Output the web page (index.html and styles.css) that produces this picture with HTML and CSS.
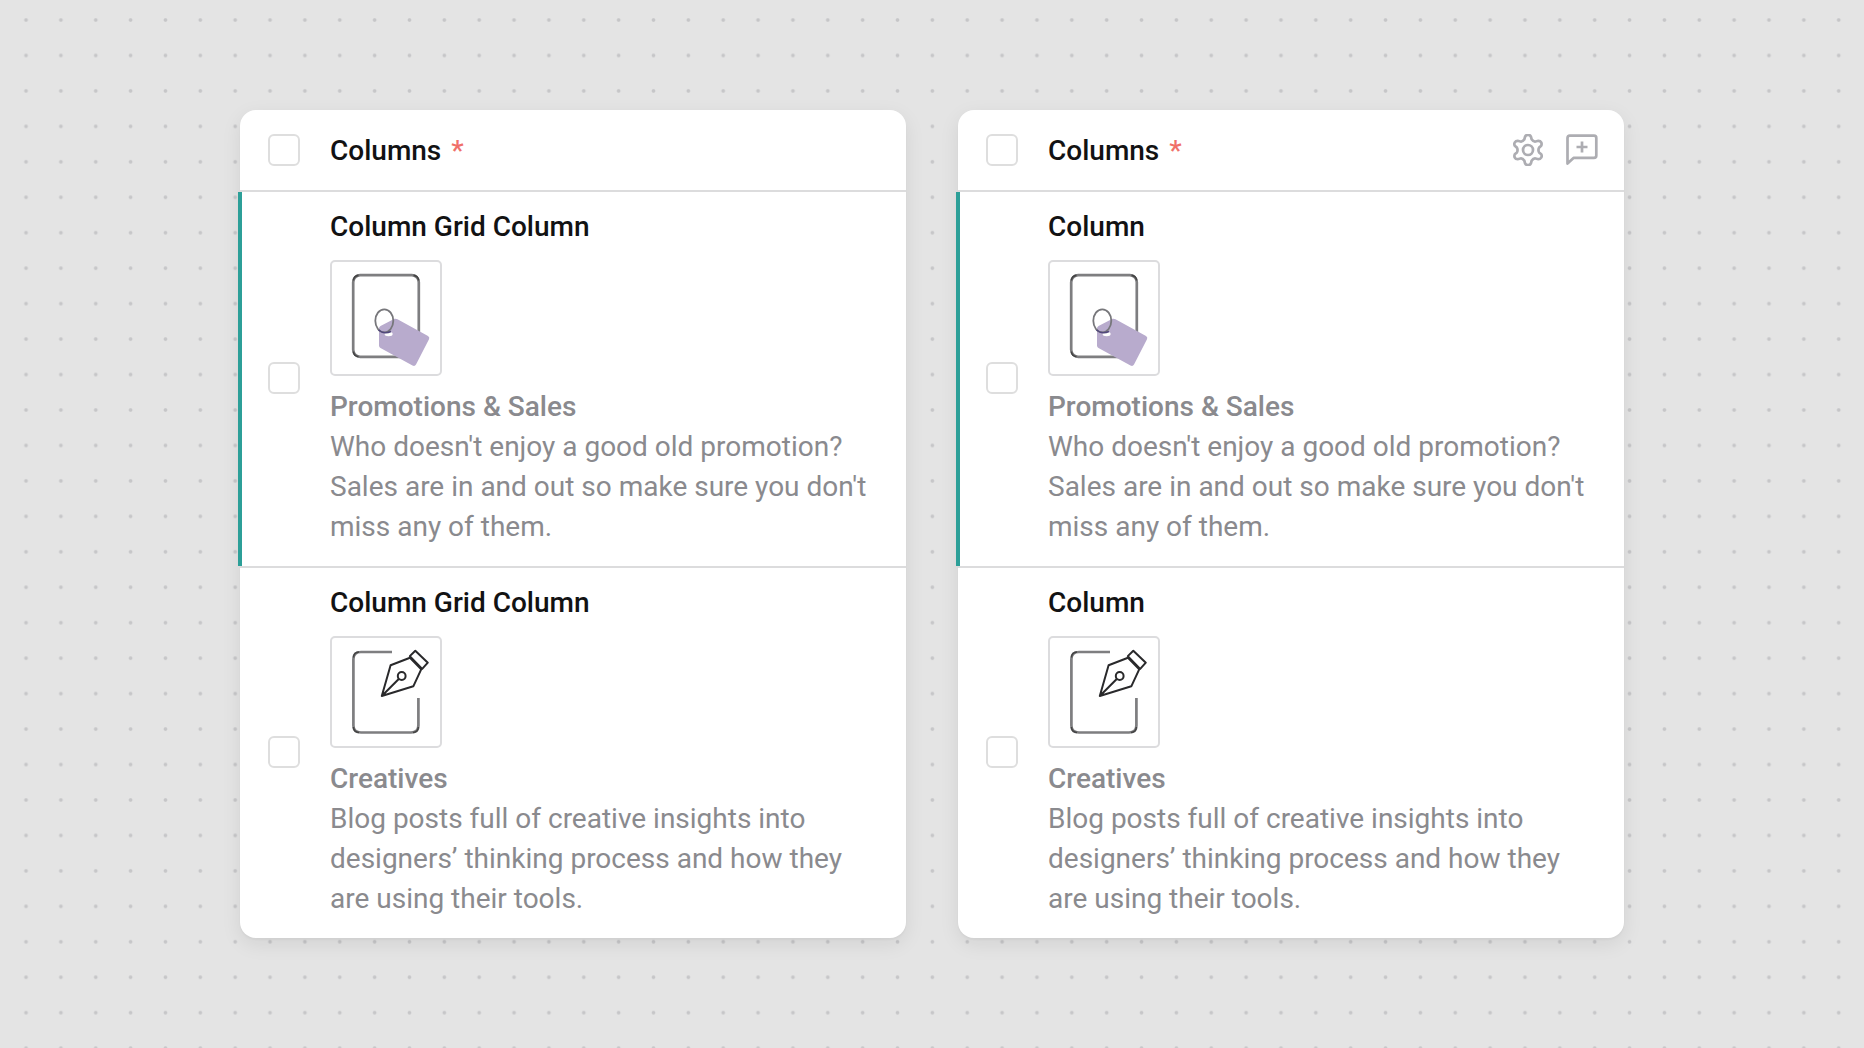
FILE: index.html
```html
<!DOCTYPE html>
<html lang="en">
<head>
<meta charset="utf-8">
<title>Columns</title>
<link rel="stylesheet" href="styles.css">
</head>
<body>
<svg class="defs" aria-hidden="true">
  <symbol id="icon-tag" viewBox="0 0 112 112">
    <rect class="frame" x="23.2" y="15.2" width="65.6" height="81.6" rx="7"/>
    <path class="corners" d="M23.4 20.500Q23.8 15.800 28.500 15.4M83.500 15.4Q88.2 15.8 88.6 20.500M23.4 91.500Q23.8 96.2 28.500 96.6"/>
    <path class="tag" d="M49 69Q48.8 67 50.5 66L64.500 58.800Q66 58.400 67.500 59.300L98 76Q100 77.300 99 79.300L86 104.500Q84.800 106.700 82.500 105.500L50.500 88Q49 87 49 85.500Z"/>
    <ellipse class="hole" cx="58.6" cy="74" rx="4" ry="2.2"/>
    <ellipse class="ring" cx="54.300" cy="60.800" rx="9" ry="11.500"/>
    <path class="ring-front" d="M48.500 70Q54 74.500 61 71.500"/>
  </symbol>
  <symbol id="icon-pen" viewBox="0 0 112 112">
    <path class="frame" d="M62 16H31Q23.400 16 23.400 23V89.500Q23.400 96.500 31 96.500H81Q88.400 96.500 88.400 89.500V62"/>
    <path class="corners" d="M23.400 21.500Q23.800 16.300 29 16M23.400 91Q23.800 96.200 29 96.500M83 96.500Q88 96.200 88.400 91"/>
    <path class="pen" d="M51.800 60L60.600 29.300L80 21.700L91.200 33.300L83.300 50.300ZM51.800 60L69 42.800M85.300 14.700L97.800 26.700L92.200 32.900L79.800 20.100Z"/>
    <circle class="pen" cx="71.700" cy="40" r="3.900"/>
  </symbol>
</svg>
<main class="board">
  <section class="card">
    <header class="card-header">
      <span class="checkbox"></span>
      <h2 class="label">Columns <span class="required">*</span></h2>
    </header>
    <div class="row selected">
      <span class="checkbox"></span>
      <div class="content">
        <h3 class="label">Column Grid Column</h3>
        <div class="thumb tall"><svg class="art"><use href="#icon-tag"/></svg></div>
        <p class="text"><strong>Promotions &amp; Sales</strong><br>Who doesn't enjoy a good old promotion?<br>Sales are in and out so make sure you don't<br>miss any of them.</p>
      </div>
    </div>
    <div class="row">
      <span class="checkbox"></span>
      <div class="content">
        <h3 class="label">Column Grid Column</h3>
        <div class="thumb"><svg class="art"><use href="#icon-pen"/></svg></div>
        <p class="text"><strong>Creatives</strong><br>Blog posts full of creative insights into<br>designers’ thinking process and how they<br>are using their tools.</p>
      </div>
    </div>
  </section>
  <section class="card">
    <header class="card-header">
      <span class="checkbox"></span>
      <h2 class="label">Columns <span class="required">*</span></h2>
      <div class="actions">
        <svg class="action" viewBox="-16 -16 32 32"><path d="M-3.600 -10.800L-2.900 -13.400Q-2 -15.200 0 -15.200T2.900 -13.400L3.600 -10.800Q5.500 -8 7.600 -8.500L10.400 -9.200Q12.400 -9.200 13.200 -7.600T13.200 -4.200L11.100 -2.400Q9.800 0 11.100 2.400L13.200 4.200Q14.200 6 13.200 7.600T10.400 9.200L7.600 8.500Q5.500 8 3.600 10.800L2.900 13.400Q2 15.200 0 15.200T-2.900 13.400L-3.600 10.800Q-5.500 8 -7.600 8.500L-10.400 9.200Q-12.400 9.200 -13.200 7.600T-13.200 4.200L-11.100 2.400Q-9.800 0 -11.100 -2.400L-13.200 -4.200Q-14.200 -6 -13.200 -7.600T-10.400 -9.200L-7.600 -8.500Q-5.500 -8 -3.600 -10.800Z"/><circle r="5"/></svg>
        <svg class="action" viewBox="0 0 32 32"><path d="M1.500 29.500V4Q1.500 1.700 3.800 1.700H28Q30.300 1.700 30.300 4V21.500Q30.300 23.900 28 23.900H7.500Z"/><path d="M16 7.500V18.500M10.500 13H21.500"/></svg>
      </div>
    </header>
    <div class="row selected">
      <span class="checkbox"></span>
      <div class="content">
        <h3 class="label">Column</h3>
        <div class="thumb tall"><svg class="art"><use href="#icon-tag"/></svg></div>
        <p class="text"><strong>Promotions &amp; Sales</strong><br>Who doesn't enjoy a good old promotion?<br>Sales are in and out so make sure you don't<br>miss any of them.</p>
      </div>
    </div>
    <div class="row">
      <span class="checkbox"></span>
      <div class="content">
        <h3 class="label">Column</h3>
        <div class="thumb"><svg class="art"><use href="#icon-pen"/></svg></div>
        <p class="text"><strong>Creatives</strong><br>Blog posts full of creative insights into<br>designers’ thinking process and how they<br>are using their tools.</p>
      </div>
    </div>
  </section>
</main>
</body>
</html>
```
FILE: styles.css
```css
* { box-sizing: border-box; margin: 0; padding: 0; }
body {
  height: 1048px;
  overflow: hidden;
  background-color: #e4e4e4;
  background-image: radial-gradient(circle, #c6c6c8 1.3px, rgba(198, 198, 200, 0) 2.3px);
  background-size: 34.86px 35.46px;
  background-position: 8.6px 2.3px;
  font-family: Roboto, "Liberation Sans", sans-serif;
  font-size: 28px;
  line-height: 40px;
}
.defs { display: none; }
.board { display: flex; gap: 52px; padding: 110px 240px; }
.card {
  width: 666px;
  height: 828px;
  background: #fff;
  border-radius: 16px;
  box-shadow: 0 2px 2px rgba(0, 0, 0, .03), 0 6px 20px rgba(0, 0, 0, .08);
}
.card-header {
  display: flex;
  align-items: center;
  gap: 30px;
  height: 82px;
  padding: 0 26px 0 28px;
  border-bottom: 2px solid #dcdcdd;
}
.checkbox {
  flex: none;
  width: 32px;
  height: 32px;
  border: 2px solid #dedede;
  border-radius: 6px;
}
.label { color: #121213; font-size: 28px; font-weight: 500; }
.card-header .label { padding-top: 1px; }
.required { margin-left: 3px; color: #f0706a; }
.actions { display: flex; gap: 22px; margin-left: auto; }
.action {
  width: 32px;
  height: 32px;
  fill: none;
  stroke: #adadb2;
  stroke-width: 2.7;
  stroke-linejoin: round;
}
.row { display: flex; gap: 30px; padding: 15px 28px 19px; }
.row + .row { border-top: 2px solid #dcdcdd; }
.row .checkbox { align-self: center; margin-bottom: -2px; }
.selected { margin-left: -2px; padding-left: 26px; border-left: 4px solid #2c9f98; }
.content { white-space: nowrap; }
.thumb {
  width: 112px;
  height: 112px;
  margin: 13px 0 11px;
  border: 2px solid #dcdcde;
  border-radius: 5px;
}
.tall { height: 116px; }
.art { display: block; width: 112px; height: 112px; margin: -2px; }
.text { color: #8a8a8e; }
.text strong { font-weight: 500; }
.frame { fill: none; stroke: #7e7e80; stroke-width: 2.7; }
.corners { fill: none; stroke: #444; stroke-width: 1.6; }
.tag { fill: #b8abcd; }
.hole { fill: #fff; }
.ring { fill: none; stroke: #77777b; stroke-width: 1.8; }
.ring-front { fill: none; stroke: #51487c; stroke-width: 1.6; }
.pen { fill: none; stroke: #29292b; stroke-width: 2; stroke-linejoin: round; }
```
